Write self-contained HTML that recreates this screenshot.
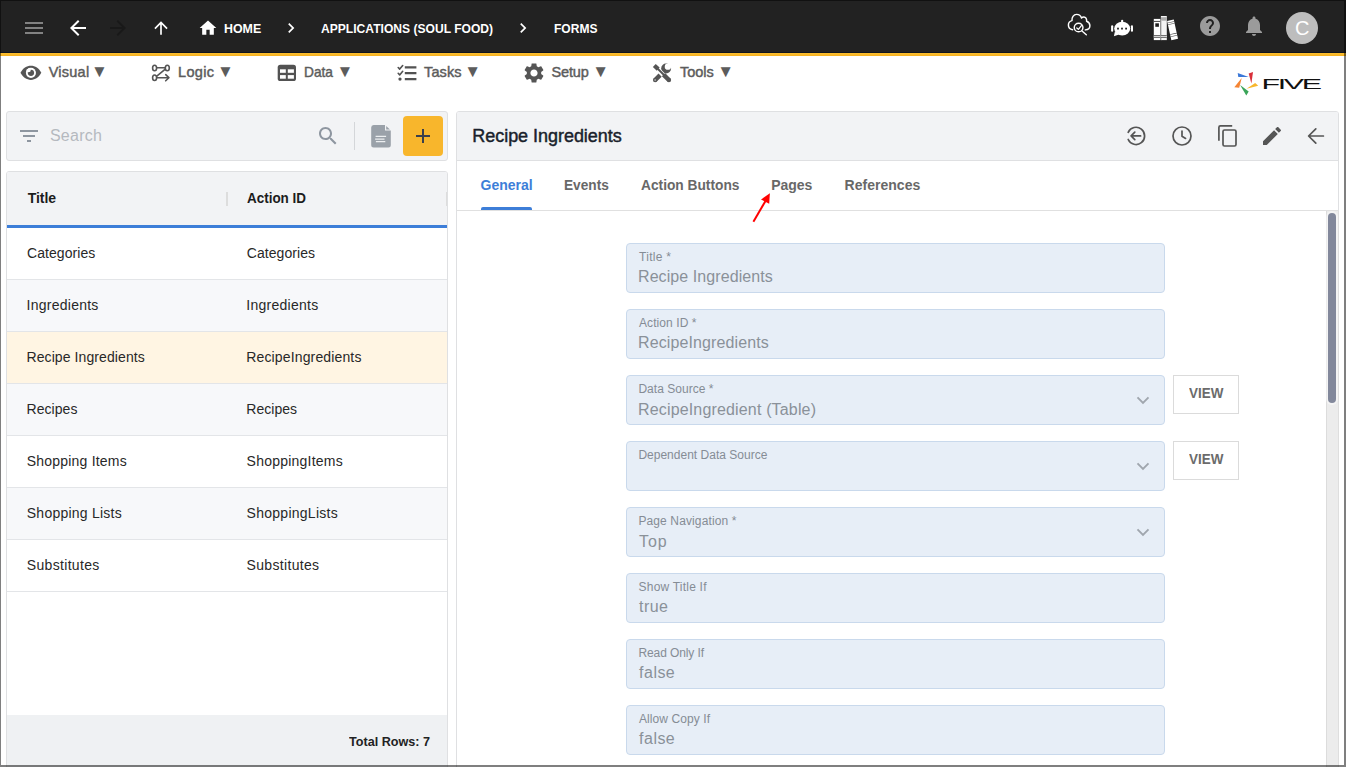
<!DOCTYPE html>
<html lang="en">
<head>
<meta charset="utf-8">
<title>Five - Forms</title>
<style>
*{box-sizing:border-box;margin:0;padding:0}
html,body{width:1346px;height:767px;overflow:hidden;background:#fff}
body{font-family:"Liberation Sans",sans-serif;color:#222;position:relative}
.abs{position:absolute}
.t{position:absolute;white-space:nowrap;line-height:1}
svg{position:absolute;display:block;overflow:visible}
/* frame */
#frame-top{left:0;top:0;width:1346px;height:1px;background:rgba(0,0,0,.5);z-index:50}
#frame-left{left:0;top:1px;width:1px;height:764px;background:rgba(0,0,0,.5);z-index:50}
#frame-right{left:1344px;top:1px;width:2px;height:764px;background:rgba(0,0,0,.5);z-index:50}
#frame-bottom{left:0;top:765px;width:1346px;height:2px;background:rgba(0,0,0,.5);z-index:50}
/* top bar */
#topbar{left:0;top:0;width:1346px;height:53px;background:#222222;border-bottom:1px solid #10151f}
#stripe{left:0;top:53px;width:1346px;height:3px;background:linear-gradient(#fdc030,#f4b020)}
.crumb{color:#fff;font-weight:bold;font-size:13px}
/* menu */
.med{font-weight:normal;-webkit-text-stroke:.45px currentColor}
.menu{color:#5c5c5c;font-size:14.5px;font-weight:normal;-webkit-text-stroke:.45px #5c5c5c}
.dn{color:#5c5c5c;font-size:17px}
/* left */
#searchbox{left:6px;top:111px;width:442px;height:50px;background:#f2f3f5;border:1px solid #dfe0e2;border-radius:3px}
#addbtn{left:403px;top:116px;width:40px;height:40px;background:#f8b62c;border-radius:4px}
#sep{left:354px;top:122px;width:1px;height:28px;background:#d4d6d9}
#table{left:6px;top:171px;width:442px;height:600px;background:#fff;border:1px solid #dfe0e2;border-radius:3px 3px 0 0;overflow:hidden}
#thead{left:0;top:0;width:440px;height:53px;background:#f2f3f5}
#blueline{left:0;top:53px;width:440px;height:3px;background:#3d7ed8}
.row{left:0;width:440px;height:52px;border-bottom:1px solid #e3e5e8}
.row.alt{background:#f7f8fa}
.row.sel{background:#fff5e3}
.cell{font-size:14px;color:#282828}
.th{font-size:14px;font-weight:bold;color:#1c1c1c}
#tfoot{left:0;top:543px;width:440px;height:60px;background:#eff1f3}
/* right */
#panel{left:456px;top:111px;width:883px;height:670px;background:#fff;border:1px solid #dfe0e2;border-radius:3px 3px 0 0;overflow:hidden}
#phead{left:0;top:0;width:881px;height:49px;background:#f2f3f5;border-bottom:1px solid #dfe0e2}
#tabsline{left:0;top:98px;width:881px;height:1px;background:#e0e0e0}
.tab{font-size:14px;font-weight:bold;color:#686868}
.field{left:626px;width:539px;height:50px;background:#e7eef7;border:1px solid #c9d9ec;border-radius:4px}
.lbl{font-size:12px;color:#858c95}
.val{font-size:16px;color:#8a9199}
.view{width:66px;height:39px;border:1px solid #dbdbdb;background:#fff}
.viewt{font-size:14px;font-weight:bold;color:#6b6b6b}
#sbtrack{left:1326px;top:211px;width:13px;height:556px;background:#ececec;border-left:1px solid #dcdcdc;border-right:1px solid #dedede}
#sbthumb{left:1328px;top:213px;width:8px;height:190px;background:#82889b;border-radius:4px;box-shadow:0 0 0 2px rgba(255,255,255,.45)}
</style>
</head>
<body>
<!-- TOPBAR -->
<div class="abs" id="topbar"></div>
<div class="abs" id="stripe"></div>


<!-- TOPBAR ICONS -->
<svg style="left:22px;top:16px" width="24" height="24" viewBox="0 0 24 24"><path fill="#828282" d="M3 18h18v-2H3v2zm0-5h18v-2H3v2zm0-7v2h18V6H3z"/></svg>
<svg style="left:66px;top:16px" width="24" height="24" viewBox="0 0 24 24"><path fill="#ffffff" d="M20 11H7.83l5.59-5.590L12 4l-8 8 8 8 1.410-1.410L7.830 13H20v-2z"/></svg>
<svg style="left:106px;top:16px" width="24" height="24" viewBox="0 0 24 24"><path fill="#191919" d="M12 4l-1.410 1.410L16.170 11H4v2h12.170l-5.580 5.590L12 20l8-8z"/></svg>
<svg style="left:151px;top:18px" width="20" height="20" viewBox="0 0 24 24"><path fill="#ffffff" d="M4 12l1.410 1.410L11 7.830V20h2V7.830l5.580 5.590L20 12l-8-8-8 8z"/></svg>
<svg style="left:198px;top:18.200px" width="20" height="20" viewBox="0 0 24 24"><path fill="#ffffff" d="M10 20v-6h4v6h5v-8h3L12 3 2 12h3v8z"/></svg>
<svg style="left:281.200px;top:18.200px" width="20" height="20" viewBox="0 0 24 24"><path fill="#ffffff" d="M10 6L8.590 7.410 13.170 12l-4.580 4.590L10 18l6-6z"/></svg>
<svg style="left:513.100px;top:18.200px" width="20" height="20" viewBox="0 0 24 24"><path fill="#ffffff" d="M10 6L8.590 7.410 13.170 12l-4.580 4.590L10 18l6-6z"/></svg>
<svg style="left:1198px;top:14px" width="24" height="24" viewBox="0 0 24 24"><path fill="#9b9b9b" d="M12 2C6.480 2 2 6.480 2 12s4.480 10 10 10 10-4.480 10-10S17.520 2 12 2zm1 17h-2v-2h2v2zm2.070-7.750l-.9.920C13.450 12.900 13 13.500 13 15h-2v-.5c0-1.100.450-2.100 1.170-2.830l1.240-1.260c.370-.360.590-.860.590-1.410 0-1.100-.9-2-2-2s-2 .9-2 2H8c0-2.210 1.790-4 4-4s4 1.790 4 4c0 .880-.360 1.680-.930 2.250z"/></svg>
<svg style="left:1242px;top:14px" width="24" height="24" viewBox="0 0 24 24"><path fill="#9b9b9b" d="M12 22c1.100 0 2-.9 2-2h-4c0 1.100.890 2 2 2zm6-6v-5c0-3.070-1.640-5.640-4.500-6.320V4c0-.830-.670-1.500-1.500-1.500s-1.500.670-1.500 1.500v.680C7.630 5.360 6 7.920 6 11v5l-2 2v1h16v-1l-2-2z"/></svg>
<div class="abs" style="left:1286px;top:12px;width:32px;height:32px;border-radius:50%;background:#bdbdbd"></div>
<div class="t" style="left:1295px;top:18px;font-size:20px;color:#fff">C</div>


<!-- cloud / robot / books -->
<svg style="left:1062px;top:8px" width="36" height="34" viewBox="0 0 36 34" fill="none" stroke="#fff" stroke-width="1.450" stroke-linecap="round" stroke-linejoin="round"><path d="M10.600 21.700C8 21.500 6.400 19.500 6.400 17.100C6.400 14.700 8 13 10 12.600C9.600 9.500 11.500 6.400 14.600 6.400C17 6.400 18.800 7.900 19.500 10C20.200 9.200 21 8.900 21.900 8.900C23.600 8.900 24.900 10.600 24.600 13.300C26.600 14 27.900 15.800 27.900 17.800C27.900 20 26.200 21.700 23.300 21.900"/><circle cx="16.600" cy="19.500" r="4.350"/><path d="M20 23L24.300 26.700"/><path stroke-width="1.300" d="M14.800 20L16.400 21.300L19.400 17.600"/></svg>
<svg style="left:1104px;top:10px" width="36" height="34" viewBox="0 0 36 34"><ellipse cx="18.200" cy="18.600" rx="8" ry="6.900" fill="#fff"/><rect x="17.100" y="9.800" width="2.100" height="4" rx="1" fill="#fff"/><path fill="#fff" d="M10.900 21.500L9.900 26.200L15 24.600z"/><rect x="7.100" y="15.300" width="2.100" height="6.400" rx="1.050" fill="#fff"/><rect x="26.900" y="15.300" width="2.100" height="6.400" rx="1.050" fill="#fff"/><rect x="13.100" y="17.700" width="1.800" height="1.800" fill="#222"/><rect x="17.100" y="17.700" width="1.800" height="1.800" fill="#222"/><rect x="21.200" y="17.700" width="1.800" height="1.800" fill="#222"/></svg>
<svg style="left:1148px;top:10px" width="36" height="34" viewBox="0 0 36 34"><rect x="5.800" y="8.900" width="6.600" height="21.200" fill="#fff"/><rect x="5.800" y="10.900" width="6.600" height="1" fill="#444"/><rect x="7.300" y="13.300" width="3.600" height="3.500" fill="#1e1e1e"/><rect x="5.800" y="25" width="6.600" height="0.900" fill="#555"/><rect x="5.800" y="25.900" width="6.600" height="1.300" fill="#d5d5d5"/><rect x="5.800" y="27.200" width="6.600" height="0.800" fill="#555"/><rect x="12.400" y="8.900" width="0.500" height="21.200" fill="#8a8a8a"/><rect x="12.900" y="6" width="5.900" height="24.100" fill="#f4f4f4"/><rect x="12.900" y="7.200" width="5.900" height="3.500" fill="#ababab"/><rect x="12.900" y="10.700" width="0.900" height="19.400" fill="#c9c9c9"/><rect x="12.900" y="25" width="5.900" height="0.900" fill="#555"/><rect x="12.900" y="25.900" width="5.900" height="1.300" fill="#d5d5d5"/><rect x="12.900" y="27.200" width="5.900" height="0.800" fill="#555"/><g transform="rotate(-12.600 19.100 11.100)"><rect x="19.100" y="11.100" width="6.800" height="19.500" fill="#fff"/><rect x="19.100" y="12.700" width="6.800" height="0.700" fill="#444"/><rect x="19.100" y="14.500" width="6.800" height="0.700" fill="#444"/><rect x="19.100" y="24.500" width="6.800" height="0.700" fill="#444"/><rect x="19.100" y="26.800" width="6.800" height="0.700" fill="#444"/></g></svg>

<!-- breadcrumb text -->
<div class="t crumb" style="left:224.1px;top:22px;transform-origin:0 0;transform:scaleX(0.9546)">HOME</div>
<div class="t crumb" style="left:320.9px;top:22px;transform-origin:0 0;transform:scaleX(0.9296)">APPLICATIONS (SOUL FOOD)</div>
<div class="t crumb" style="left:553.8px;top:22px;transform-origin:0 0;transform:scaleX(0.9271)">FORMS</div>



<!-- FIVE logo -->
<svg style="left:1230px;top:68px" width="100" height="32" viewBox="1230 68 100 32"><polygon fill="#3b78d8" points="1237.700,72.900 1238.300,77.100 1248.700,76.900"/><polygon fill="#d9303a" points="1248.700,73.600 1253,71.900 1251.400,83.400"/><polygon fill="#f8b62c" points="1255.200,83 1258.200,85.700 1246.600,88.700"/><polygon fill="#3ba559" points="1240.100,85.100 1248.700,91.400 1246.300,95.400"/><polygon fill="#f58433" points="1241.700,78 1234.300,87.200 1239.200,87.800"/><text transform="translate(1261.500,88.800) scale(2.160,1)" font-family="'Liberation Sans',sans-serif" font-size="14.100" letter-spacing="-1.100" fill="#111">FIVE</text></svg>

<!-- MENU ICONS -->
<svg style="left:14px;top:56px" width="36" height="34" viewBox="0 0 36 34"><defs><clipPath id="eyeclip"><circle cx="16.930" cy="16.840" r="5.100"/></clipPath></defs><path fill="#555555" d="M6.500 16.850C8.800 12.300 12.600 9.800 16.900 9.800C21.200 9.800 25 12.300 27.300 16.850C25 21.400 21.200 23.900 16.900 23.900C12.600 23.900 8.800 21.400 6.500 16.850Z"/><circle cx="16.930" cy="16.840" r="5.050" fill="#fff"/><circle cx="16.930" cy="16.840" r="3.150" fill="#555555"/><circle cx="14.300" cy="13.800" r="2.500" fill="#fff" clip-path="url(#eyeclip)"/></svg>
<svg style="left:150px;top:63px" width="22" height="20" viewBox="0 0 22 20" fill="none" stroke="#555555" stroke-width="1.600" stroke-linecap="round" stroke-linejoin="round"><ellipse cx="4.600" cy="5" rx="2" ry="2.750"/><ellipse cx="17.300" cy="5" rx="2" ry="2.750"/><ellipse cx="4.600" cy="14.800" rx="2" ry="2.750"/><path d="M6.800 4.800H15.100M15 6.300L6.800 13.100M6.800 14.700H18.600M15.700 11.700L18.900 14.700L15.700 17.800"/></svg>
<svg style="left:277px;top:64px" width="20" height="18" viewBox="0 0 20 18"><rect x="0.700" y="0.800" width="18.300" height="16.200" rx="2.600" fill="#525252"/><rect x="3" y="5.300" width="5.800" height="3.500" fill="#fff"/><rect x="10.800" y="5.300" width="6.100" height="3.500" fill="#fff"/><rect x="3" y="11.100" width="5.800" height="3.600" fill="#fff"/><rect x="10.800" y="11.100" width="6.100" height="3.600" fill="#fff"/></svg>
<svg style="left:397px;top:64px" width="21" height="18" viewBox="0 0 21 18" fill="none" stroke="#525252" stroke-linejoin="round"><path stroke-width="2.200" d="M7.800 3.400H19.400M7.800 9.200H19.400M7.800 15.100H19.400"/><path stroke-width="1.600" stroke-linecap="round" d="M1.200 3.500L2.700 5.100L5.700 1.500M1.200 9.300L2.700 10.900L5.700 7.300"/><circle cx="3" cy="15.100" r="1.650" fill="#525252" stroke="none"/></svg>
<svg style="left:522px;top:61px" width="24" height="24" viewBox="0 0 24 24"><path fill="#555555" d="M19.140 12.940c.040-.3.060-.610.060-.940 0-.320-.020-.640-.070-.940l2.030-1.580c.180-.140.230-.410.120-.610l-1.920-3.320c-.120-.220-.370-.290-.590-.220l-2.390.960c-.5-.380-1.030-.7-1.620-.940l-.360-2.540c-.040-.240-.240-.410-.480-.410h-3.840c-.240 0-.430.170-.470.410l-.360 2.540c-.590.240-1.130.570-1.620.940l-2.390-.960c-.220-.080-.470 0-.590.220L2.740 8.870c-.120.210-.080.470.12.610l2.030 1.580c-.050.3-.090.630-.090.940s.020.640.070.940l-2.030 1.580c-.180.140-.230.410-.120.610l1.920 3.320c.120.220.370.290.590.220l2.390-.960c.5.380 1.030.7 1.620.940l.360 2.540c.050.240.240.410.480.410h3.840c.240 0 .440-.170.470-.410l.360-2.540c.590-.240 1.130-.560 1.620-.940l2.390.960c.220.080.470 0 .590-.220l1.920-3.320c.120-.220.070-.470-.120-.610l-2.010-1.580zM12 15.600c-1.980 0-3.600-1.620-3.600-3.600s1.620-3.600 3.600-3.600 3.600 1.620 3.600 3.600-1.620 3.600-3.600 3.600z"/></svg>
<svg style="left:652px;top:63px" width="21" height="21" viewBox="0 0 21 21" fill="none"><circle cx="14.100" cy="5.500" r="4.950" fill="#555555"/><circle cx="15.900" cy="3.700" r="3.150" fill="#fff"/><path d="M16 3.600L21 -1.400" stroke="#fff" stroke-width="4.600"/><path d="M12.200 8L9.800 10.400" stroke="#555555" stroke-width="3.200"/><path d="M3.200 17L8.100 12.100" stroke="#555555" stroke-width="4.500"/><circle cx="3.200" cy="17" r="2.250" fill="#555555"/><circle cx="3.100" cy="17.100" r="0.750" fill="#d8d8d8"/><path d="M4.500 4.500L13 13" stroke="#fff" stroke-width="3.300"/><path d="M2.300 2.500L6.200 6.100" stroke="#555555" stroke-width="4.200"/><path d="M5 5L12.500 12.500" stroke="#555555" stroke-width="1.900"/><path d="M11.500 11.600L16.900 17" stroke="#555555" stroke-width="4.500"/><circle cx="16.900" cy="17" r="2.250" fill="#555555"/></svg>

<!-- MENU -->
<div class="t menu" style="left:48.7px;top:65px;letter-spacing:0.24px">Visual</div>
<div class="t menu" style="left:178.1px;top:65px;letter-spacing:0.28px">Logic</div>
<div class="t menu" style="left:304.0px;top:65px;transform-origin:0 0;transform:scaleX(0.9454)">Data</div>
<div class="t menu" style="left:424.1px;top:65px;letter-spacing:0.1px">Tasks</div>
<div class="t menu" style="left:551.5px;top:65px;letter-spacing:-0.14px">Setup</div>
<div class="t menu" style="left:680.0px;top:65px;letter-spacing:-0.02px">Tools</div>

<div class="t dn" style="left:91.1px;top:63px">▼</div>
<div class="t dn" style="left:217.0px;top:63px">▼</div>
<div class="t dn" style="left:336.6px;top:63px">▼</div>
<div class="t dn" style="left:464.2px;top:63px">▼</div>
<div class="t dn" style="left:592.3px;top:63px">▼</div>
<div class="t dn" style="left:717.2px;top:63px">▼</div>

<!-- LEFT: search -->
<div class="abs" id="searchbox"></div>
<div class="t" style="left:49.9px;top:128px;letter-spacing:0.28px;font-size:16px;color:#b5b9bf">Search</div>
<div class="abs" id="sep"></div>
<div class="abs" id="addbtn"></div>


<!-- search icons -->
<svg style="left:17px;top:124px" width="24" height="24" viewBox="0 0 24 24"><path fill="#8e96a0" d="M10 18h4v-2h-4v2zM3 6v2h18V6H3zm3 7h12v-2H6v2z"/></svg>
<svg style="left:316px;top:124px" width="24" height="24" viewBox="0 0 24 24"><path fill="#8e96a0" d="M15.500 14h-.790l-.280-.270C15.410 12.590 16 11.110 16 9.500 16 5.910 13.090 3 9.500 3S3 5.910 3 9.500 5.910 16 9.500 16c1.610 0 3.090-.590 4.230-1.570l.270.280v.790l5 4.990L20.490 19l-4.990-5zm-6 0C7.010 14 5 11.990 5 9.500S7.010 5 9.500 5 14 7.010 14 9.500 11.990 14 9.500 14z"/></svg>
<svg style="left:371px;top:124.500px" width="20" height="23" viewBox="0 0 20 23"><path fill="#9aa1a9" d="M2.800 0.100H14V5.600H19.800V20a2.500 2.500 0 0 1-2.500 2.500H2.700A2.500 2.500 0 0 1 0.200 20V2.600A2.500 2.500 0 0 1 2.800 0.100z"/><path fill="#9aa1a9" d="M15.200 1L18.900 4.400H15.200z"/><path stroke="#eceef0" stroke-width="1.300" fill="none" d="M4.600 11.450H15.100M4.100 14.050H13.500M4.900 16.650H14.300"/></svg>
<svg style="left:411px;top:124px" width="24" height="24" viewBox="0 0 24 24"><path fill="#3b404b" d="M19 13h-6v6h-2v-6H5v-2h6V5h2v6h6v2z"/></svg>

<!-- LEFT: table -->
<div class="abs" id="table">
  <div class="abs" id="thead"></div>
  <div class="abs" id="blueline"></div>
  <div class="abs row" style="top:56px"></div>
  <div class="abs row alt" style="top:108px"></div>
  <div class="abs row sel" style="top:160px"></div>
  <div class="abs row alt" style="top:212px"></div>
  <div class="abs row" style="top:264px"></div>
  <div class="abs row alt" style="top:316px"></div>
  <div class="abs row" style="top:368px"></div>
  <div class="abs" id="tfoot"></div>
</div>
<div class="t th" style="left:27.7px;top:191px;letter-spacing:-0.04px">Title</div>
<div class="t th" style="left:246.7px;top:191px;transform-origin:0 0;transform:scaleX(0.9606)">Action ID</div>
<div class="abs" style="left:226px;top:192px;width:2px;height:14px;background:#dddddd"></div>
<div class="abs" style="left:446px;top:192px;width:1px;height:14px;background:#dddddd"></div>

<div class="t cell" style="left:27.0px;top:246px;letter-spacing:0.07px">Categories</div>
<div class="t cell" style="left:246.8px;top:246px;letter-spacing:0.06px">Categories</div>
<div class="t cell" style="left:26.5px;top:298px;letter-spacing:0.26px">Ingredients</div>
<div class="t cell" style="left:246.3px;top:298px;letter-spacing:0.27px">Ingredients</div>
<div class="t cell" style="left:26.5px;top:350px;letter-spacing:0.09px">Recipe Ingredients</div>
<div class="t cell" style="left:246.3px;top:350px;letter-spacing:0.14px">RecipeIngredients</div>
<div class="t cell" style="left:26.5px;top:402px;letter-spacing:0.05px">Recipes</div>
<div class="t cell" style="left:246.3px;top:402px;letter-spacing:0.02px">Recipes</div>
<div class="t cell" style="left:26.8px;top:454px;letter-spacing:0.2px">Shopping Items</div>
<div class="t cell" style="left:246.6px;top:454px;letter-spacing:0.22px">ShoppingItems</div>
<div class="t cell" style="left:26.8px;top:506px;letter-spacing:0.23px">Shopping Lists</div>
<div class="t cell" style="left:246.6px;top:506px;letter-spacing:0.26px">ShoppingLists</div>
<div class="t cell" style="left:26.8px;top:558px;letter-spacing:0.32px">Substitutes</div>
<div class="t cell" style="left:246.6px;top:558px;letter-spacing:0.32px">Substitutes</div>
<div class="t" style="left:348.9px;top:735px;transform-origin:0 0;transform:scaleX(0.9702);font-size:13px;font-weight:bold;color:#222">Total Rows: 7</div>

<!-- RIGHT panel -->
<div class="abs" id="panel">
  <div class="abs" id="phead"></div>
  <div class="abs" id="tabsline"></div>
</div>
<div class="t med" style="left:472.3px;top:127px;letter-spacing:-0.04px;font-size:18px;color:#1a1f2c">Recipe Ingredients</div>

<div class="t tab" style="left:480.6px;top:178px;letter-spacing:-0.02px;color:#3d7ed8">General</div>
<div class="t tab" style="left:563.7px;top:178px;transform-origin:0 0;transform:scaleX(0.9751)">Events</div>
<div class="t tab" style="left:640.6px;top:178px;transform-origin:0 0;transform:scaleX(0.981)">Action Buttons</div>
<div class="t tab" style="left:771.3px;top:178px;letter-spacing:-0.05px">Pages</div>
<div class="t tab" style="left:844.5px;top:178px;letter-spacing:0.03px">References</div>
<div class="abs" style="left:481px;top:207px;width:51px;height:3px;background:#3d7ed8;border-radius:2px 2px 0 0"></div>

<!-- fields -->
<div class="abs field" style="top:243px"></div>
<div class="abs field" style="top:309px"></div>
<div class="abs field" style="top:375px"></div>
<div class="abs field" style="top:441px"></div>
<div class="abs field" style="top:507px"></div>
<div class="abs field" style="top:573px"></div>
<div class="abs field" style="top:639px"></div>
<div class="abs field" style="top:705px"></div>

<div class="t lbl" style="left:639.1px;top:251px;letter-spacing:0.28px">Title *</div>
<div class="t val" style="left:638.0px;top:269px;letter-spacing:0.08px">Recipe Ingredients</div>
<div class="t lbl" style="left:639.0px;top:317px;letter-spacing:0.08px">Action ID *</div>
<div class="t val" style="left:638.0px;top:335px;letter-spacing:0.11px">RecipeIngredients</div>
<div class="t lbl" style="left:638.4px;top:383px;letter-spacing:0.03px">Data Source *</div>
<div class="t val" style="left:638.0px;top:402px;letter-spacing:0.16px">RecipeIngredient (Table)</div>
<div class="t lbl" style="left:638.4px;top:449px;letter-spacing:0.01px">Dependent Data Source</div>
<div class="t lbl" style="left:638.4px;top:515px;letter-spacing:0.12px">Page Navigation *</div>
<div class="t val" style="left:639.0px;top:534px;letter-spacing:0.94px">Top</div>
<div class="t lbl" style="left:638.6px;top:581px;letter-spacing:0.21px">Show Title If</div>
<div class="t val" style="left:639.1px;top:599px;letter-spacing:0.4px">true</div>
<div class="t lbl" style="left:638.4px;top:647px;letter-spacing:-0.09px">Read Only If</div>
<div class="t val" style="left:639.1px;top:665px;letter-spacing:0.47px">false</div>
<div class="t lbl" style="left:639.0px;top:713px;letter-spacing:0.09px">Allow Copy If</div>
<div class="t val" style="left:639.1px;top:731px;letter-spacing:0.47px">false</div>

<div class="abs view" style="left:1173px;top:375px"></div>
<div class="abs view" style="left:1173px;top:441px"></div>
<div class="t viewt" style="left:1188.5px;top:386px;transform-origin:0 0;transform:scaleX(0.9586)">VIEW</div>
<div class="t viewt" style="left:1188.5px;top:452px;transform-origin:0 0;transform:scaleX(0.9586)">VIEW</div>


<!-- panel header icons -->
<svg style="left:1124px;top:124px" width="24" height="24" viewBox="0 0 24 24" fill="none" stroke="#555" stroke-width="1.700" stroke-linecap="round" stroke-linejoin="round"><path d="M4.200 8.300A8.600 8.600 0 1 1 4.200 15.500"/><path d="M16.600 11.900H7.200M10.800 8.200L7.100 11.900L10.800 15.600"/></svg>
<svg style="left:1170px;top:124px" width="24" height="24" viewBox="0 0 24 24" fill="none" stroke="#555" stroke-width="1.700" stroke-linecap="round" stroke-linejoin="round"><circle cx="12" cy="12" r="9"/><path d="M12 7v5.300l3.600 2.100"/></svg>
<svg style="left:1216px;top:124px" width="24" height="24" viewBox="0 0 24 24" fill="none" stroke="#555" stroke-width="1.700" stroke-linejoin="round"><path d="M16.200 1.900H4.400a1.500 1.500 0 0 0-1.500 1.500V16.800"/><rect x="7" y="6" width="13" height="16" rx="1.500"/></svg>
<svg style="left:1260px;top:124px" width="24" height="24" viewBox="0 0 24 24"><path fill="#555" d="M3 17.250V21h3.750L17.810 9.940l-3.750-3.750L3 17.250zM20.710 7.040c.390-.390.390-1.020 0-1.410l-2.340-2.340c-.390-.390-1.020-.390-1.410 0l-1.830 1.830 3.750 3.750 1.830-1.830z"/></svg>
<svg style="left:1304px;top:124px" width="24" height="24" viewBox="0 0 24 24" fill="none" stroke="#555" stroke-width="1.700" stroke-linecap="round" stroke-linejoin="round"><path d="M19.400 12H5.200M11.800 4.800L4.600 12L11.800 19.200"/></svg>

<!-- red annotation arrow -->
<svg style="left:745px;top:188px" width="32" height="40" viewBox="745 188 32 40"><path d="M753.400 221.700L765.500 201" stroke="#ff0000" stroke-width="2" stroke-linecap="butt" fill="none"/><polygon fill="#ff0000" points="769.900,193.300 761,199.500 769.200,203.800"/></svg>

<!-- select chevrons -->
<svg style="left:1131px;top:388px" width="24" height="24" viewBox="0 0 24 24" fill="none" stroke="#a0a6ae" stroke-width="1.900" stroke-linecap="butt" stroke-linejoin="miter"><path d="M6.500 9.400L12 15L17.500 9.400"/></svg>
<svg style="left:1131px;top:454px" width="24" height="24" viewBox="0 0 24 24" fill="none" stroke="#a0a6ae" stroke-width="1.900" stroke-linecap="butt" stroke-linejoin="miter"><path d="M6.500 9.400L12 15L17.500 9.400"/></svg>
<svg style="left:1131px;top:520px" width="24" height="24" viewBox="0 0 24 24" fill="none" stroke="#a0a6ae" stroke-width="1.900" stroke-linecap="butt" stroke-linejoin="miter"><path d="M6.500 9.400L12 15L17.500 9.400"/></svg>

<!-- scrollbar -->
<div class="abs" id="sbtrack"></div>
<div class="abs" id="sbthumb"></div>

<!-- frame -->
<div class="abs" id="frame-top"></div>
<div class="abs" id="frame-left"></div>
<div class="abs" id="frame-right"></div>
<div class="abs" id="frame-bottom"></div>
</body>
</html>
